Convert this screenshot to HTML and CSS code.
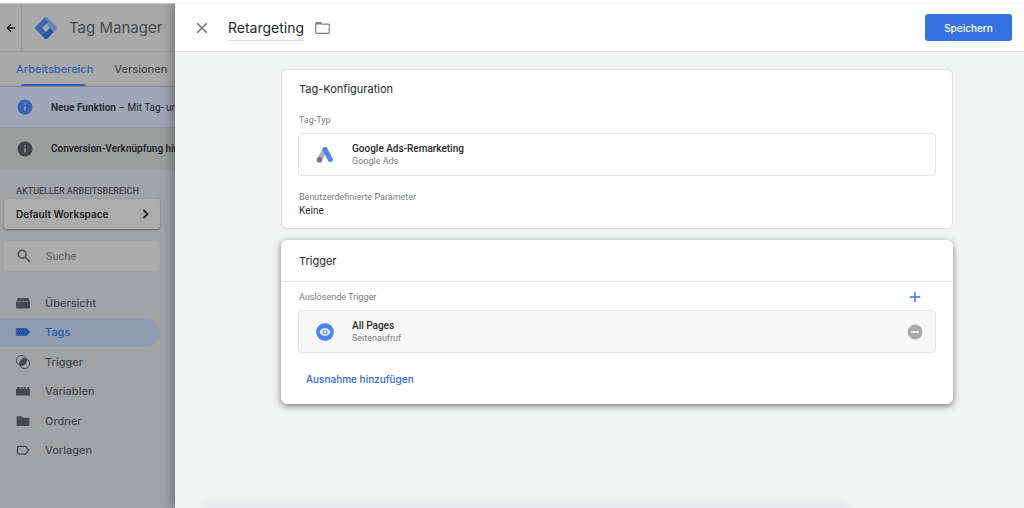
FILE: index.html
```html
<!DOCTYPE html>
<html lang="de">
<head>
<meta charset="utf-8">
<title>Tag Manager – Retargeting</title>
<link rel="stylesheet" href="styles.css">
</head>
<body>
<div class="app">
  <aside class="sidebar">
    <header class="brand">
      <button class="back" aria-label="Zurück">
        <svg width="10" height="10" viewBox="0 0 10 10" fill="none" stroke="currentColor" stroke-width="1.3"><path d="M9 5H1.6M5 1.3 1.4 5 5 8.7"/></svg>
      </button>
      <svg class="logo" width="22" height="22" viewBox="0 0 22 22">
        <path d="M9.7.6a1.9 1.9 0 0 1 2.6 0L21.4 9.700a1.900 1.900 0 0 1 0 2.600l-4.300 4.300-4-4L14.700 11 7.300 3z" fill="#6a86bd"/>
        <path d="M9.300 1 13.300 5 7.300 11l7.700 7.700-2.700 2.700a1.900 1.900 0 0 1-2.600 0L.6 12.300a1.900 1.900 0 0 1 0-2.600z" fill="#3c66ad"/>
        <path d="m11 14.700 3.700-3.700 4 4-6.400 6.400c-.8.800-2 .8-2.800 0l-1.500-3.700z" fill="#2c57a2"/>
        <path d="m11 7.300 3.700 3.700-3.700 3.700L7.300 11z" fill="#a9a9a9"/>
      </svg>
      <span class="brand-name">Tag Manager</span>
    </header>
    <nav class="tabs">
      <a class="tab tab-active" href="#">Arbeitsbereich</a>
      <a class="tab" href="#">Versionen</a>
    </nav>
    <div class="notice notice-new">
      <svg width="16" height="16" viewBox="0 0 16 16"><circle cx="8" cy="8" r="7.500" fill="#3764b4"/><path d="M8 7.200v4.300M8 4.200v1.500" stroke="#a0a7b8" stroke-width="1.500"/></svg>
      <p><b>Neue Funktion</b> – Mit Tag- un</p>
    </div>
    <div class="notice">
      <svg width="16" height="16" viewBox="0 0 16 16"><circle cx="8" cy="8" r="7.500" fill="#424446"/><path d="M8 7.200v4.300M8 4.200v1.500" stroke="#9c9e9e" stroke-width="1.500"/></svg>
      <p><b>Conversion-Verknüpfung hin</b></p>
    </div>
    <div class="tools">
      <h2 class="tools-label">AKTUELLER ARBEITSBEREICH</h2>
      <button class="workspace">Default Workspace
        <svg width="8" height="10" viewBox="0 0 8 10" fill="none" stroke="currentColor" stroke-width="1.800"><path d="m1.500 1 4 4-4 4"/></svg>
      </button>
      <label class="search">
        <svg width="14" height="14" viewBox="0 0 14 14" fill="none" stroke="#4b4d50" stroke-width="1.600"><circle cx="5.200" cy="5.200" r="3.900"/><path d="m8.200 8.200 4.800 4.800"/></svg>
        <input type="search" placeholder="Suche" aria-label="Suche">
      </label>
    </div>
    <nav class="menu">
      <a class="item" href="#"><svg width="16" height="16" viewBox="0 0 16 16" fill="currentColor"><path d="M3.500 3h9.200c.5 0 .8.300 1 .8l.9 2.200H1.600l.9-2.200c.2-.5.5-.8 1-.8zM1 6.500h14v5.700c0 .7-.5 1.200-1.200 1.200H2.200c-.7 0-1.200-.5-1.200-1.200z"/></svg>Übersicht</a>
      <a class="item item-active" href="#"><svg width="16" height="16" viewBox="0 0 16 16"><path d="M1.700 4H11c.6 0 1 .2 1.300.6L15.300 8l-3 3.600c-.3.300-.7.500-1.300.5H1.700c-.5 0-.9-.4-.9-.9V4.900c0-.5.400-.9.900-.9z" fill="#2f5cb0"/><path d="M2 5.500h10M3 7.500h11M2 9.500h11" stroke="#27396a" stroke-width="1" stroke-dasharray="1 1"/></svg>Tags</a>
      <a class="item" href="#"><svg width="16" height="16" viewBox="0 0 16 16"><g fill="none" stroke="currentColor"><circle cx="6.300" cy="6.300" r="4.900"/><circle cx="9.700" cy="9.700" r="4.900"/></g><path d="M11.200 5a4.900 4.900 0 0 1-6.200 6.200A4.900 4.900 0 0 1 11.200 5z" fill="currentColor" stroke="currentColor"/></svg>Trigger</a>
      <a class="item" href="#"><svg width="16" height="16" viewBox="0 0 16 16" fill="currentColor"><path d="M1 6h1V4.300h2.600V6h1.100V4.300h2V6h1V4.300h2V6h1.200V4.300h2.200V6h1v5.600c0 .6-.4 1-1 1H2c-.6 0-1-.4-1-1z"/></svg>Variablen</a>
      <a class="item" href="#"><svg width="16" height="16" viewBox="0 0 16 16" fill="currentColor"><path d="M2.800 3.200h3.700L8 4.700h5.200c.7 0 1.200.5 1.200 1.200v6c0 .7-.5 1.200-1.200 1.200H2.800c-.7 0-1.200-.5-1.200-1.200V4.400c0-.7.5-1.200 1.200-1.200z"/></svg>Ordner</a>
      <a class="item" href="#"><svg width="16" height="16" viewBox="0 0 16 16" fill="none" stroke="currentColor" stroke-width="1.300"><path d="M3.400 4.300h6.700c.4 0 .8.200 1 .5L13.600 8.300l-2.500 3.400c-.2.300-.6.500-1 .5H3.400c-.5 0-.9-.4-.9-.9V5.200c0-.5.400-.9.900-.9z"/></svg>Vorlagen</a>
    </nav>
  </aside>
  <main class="panel">
    <header class="panel-head">
      <button class="close" aria-label="Schließen">
        <svg width="12" height="12" viewBox="0 0 12 12" fill="none" stroke="currentColor" stroke-width="1.400"><path d="m1.200 1.200 9.600 9.600M10.800 1.200 1.200 10.800"/></svg>
      </button>
      <h1 class="title">Retargeting</h1>
      <button class="folder" aria-label="Ordner">
        <svg width="15" height="12" viewBox="0 0 15 12"><path d="M1.700.7h4l1.300 1.400h6.300c.6 0 1 .4 1 1v7.200c0 .6-.4 1-1 1H1.700c-.6 0-1-.4-1-1V1.700c0-.6.4-1 1-1z" fill="none" stroke="currentColor" stroke-width="1.200"/><path d="M1 .8h4.800l1.300 1.600H1z" fill="currentColor"/></svg>
      </button>
      <button class="save">Speichern</button>
    </header>
    <div class="content">
      <section class="card">
        <h2 class="card-title">Tag-Konfiguration</h2>
        <div class="card-body">
          <h3 class="label">Tag-Typ</h3>
          <div class="row">
            <svg class="row-icon" width="18" height="18" viewBox="0 0 18 18" fill="none" stroke-linecap="round"><path d="M9 3.500 3.600 13.500" stroke="#aeb0b3" stroke-width="5"/><path d="M9 3.500l5.400 10" stroke="#4a86ec" stroke-width="5"/><circle cx="3.500" cy="13.700" r="2.800" fill="#78797c"/></svg>
            <div><b>Google Ads-Remarketing</b><span>Google Ads</span></div>
          </div>
          <h3 class="label label-params">Benutzerdefinierte Parameter</h3>
          <p class="value">Keine</p>
        </div>
      </section>
      <section class="card card-raised">
        <h2 class="card-title card-title-ruled">Trigger</h2>
        <div class="card-body trigger-body">
          <div class="label-line">
            <h3 class="label">Auslösende Trigger</h3>
            <button class="add" aria-label="Trigger hinzufügen"><svg width="12" height="12" viewBox="0 0 12 12" fill="none" stroke="currentColor" stroke-width="1.400"><path d="M6 .8v10.400M.8 6h10.400"/></svg></button>
          </div>
          <div class="row row-filled">
            <svg class="row-icon" width="18" height="18" viewBox="0 0 18 18"><circle cx="9" cy="9" r="8.900" fill="#4c86ea"/><path d="M3.600 9C4.600 6.600 6.600 5.200 9 5.200s4.400 1.400 5.400 3.800c-1 2.400-3 3.800-5.400 3.800S4.600 11.400 3.600 9z" fill="#fff"/><circle cx="9" cy="9" r="2" fill="#fff" stroke="#4c86ea" stroke-width="1.200"/></svg>
            <div><b>All Pages</b><span>Seitenaufruf</span></div>
            <button class="remove" aria-label="Entfernen"><svg width="16" height="16" viewBox="0 0 16 16"><circle cx="8" cy="8" r="7.500" fill="#a9a9a9"/><path d="M4 8h8" stroke="#fff" stroke-width="1.500"/></svg></button>
          </div>
          <a class="exception" href="#">Ausnahme hinzufügen</a>
        </div>
      </section>
    </div>
  </main>
</div>
</body>
</html>
```
FILE: styles.css
```css
* { box-sizing: border-box; }
body, h1, h2, h3, p { margin: 0; font-weight: 400; }
body { font-family: Roboto, "Liberation Sans", sans-serif; background: #fff; }
button { font: inherit; color: inherit; background: none; border: 0; padding: 0; display: flex; align-items: center; }
a { text-decoration: none; color: inherit; }
svg { display: block; flex: none; }

.app {
  display: grid;
  grid-template-columns: 175px 1fr;
  min-height: 100vh;
  padding-top: 3px;
}

/* Dimmed navigation behind the open panel */
.sidebar {
  background: #a2a3a5;
  color: #47494c;
  overflow: hidden;
  border-top: 1px solid #c6c6c6;
}
.brand {
  display: flex;
  align-items: center;
  height: 48px;
  background: #a9a9a9;
  border-bottom: 1px solid #989898;
}
.back { height: 100%; width: 22px; justify-content: center; border-right: 1px solid #999; color: #1f2022; }
.logo { margin: 0 12px 0 13px; }
.brand-name { font: 15px Inter, sans-serif; white-space: nowrap; }

.tabs { display: flex; gap: 21px; height: 35px; padding-left: 16px; background: #a9a9a9; border-bottom: 1px solid #86888b; }
.tab { position: relative; display: flex; align-items: center; font: 500 11px Inter, sans-serif; }
.tab-active { color: #3261b5; }
.tab-active::after { content: ""; position: absolute; left: 5px; right: 7px; bottom: 0; height: 2px; border-radius: 2px 2px 0 0; background: #3261b5; }

.notice { display: flex; align-items: center; gap: 18px; height: 41px; padding-left: 17px; background: #9c9e9e; color: #242628; font-size: 10px; white-space: nowrap; }
.notice-new { background: #9fa6b7; border-bottom: 1px solid #9498a1; }
.notice b { font-weight: 600; }

.tools { padding: 17px 15px 0 4px; }
.tools-label { padding-left: 12px; font-size: 9px; font-weight: 500; line-height: 10px; }
.workspace {
  justify-content: space-between;
  width: 100%;
  height: 30px;
  margin-top: 3px;
  padding: 0 10px 0 12px;
  border-radius: 3px;
  background: #acacac;
  box-shadow: 0 1px 2px #66686b;
  color: #242628;
  font: 600 10px Inter, sans-serif;
}
.search { display: flex; align-items: center; gap: 15px; height: 30px; margin-top: 12px; padding: 0 13px; border-radius: 3px; background: #ababab; }
.search input { flex: 1; min-width: 0; padding: 0; border: 0; outline: 0; background: none; font: 11px Roboto, sans-serif; color: #55575a; }
.search input::placeholder { color: #5e6063; opacity: 1; }

.menu { display: grid; grid-template-rows: repeat(6, 1fr); height: 177px; margin: 17px 15px 0 0; }
.item { display: flex; align-items: center; gap: 14px; padding-left: 15px; border-radius: 0 15px 15px 0; font: 500 11px Inter, sans-serif; }
.item-active { background: #929db3; color: #2b57a8; }

/* Editor panel */
.panel {
  position: relative;
  display: flex;
  flex-direction: column;
  background: #f1f2f2;
  border-top: 1px solid #eee;
  box-shadow: -2px 0 12px rgba(0, 0, 0, .35);
  clip-path: inset(0 0 0 -24px);
}
.panel::after { content: ""; position: absolute; left: 32px; right: 180px; bottom: 0; height: 2px; background: #e7e8ea; box-shadow: 0 0 10px 2px #dfe0e3; }
.panel-head { display: flex; align-items: center; height: 48px; padding: 0 12px 0 21px; background: #fff; border-bottom: 1px solid #dcdddd; }
.close { color: #66696c; }
.title { margin-left: 20px; color: #26282b; font: 14px/25px Inter, sans-serif; border-bottom: 1px solid #dadcdd; }
.folder { margin-left: 11px; color: #7d7f82; }
.save { justify-content: center; width: 87px; height: 27px; margin-left: auto; border-radius: 3px; background: #3474e0; color: #fff; font: 500 10px Inter, sans-serif; }

.content { display: grid; gap: 11px; padding: 17px 71px 0 106px; }
.card { background: #fff; border: 1px solid #e2e3e4; border-radius: 6px; }
.card-raised { border-color: #fff; box-shadow: 0 2px 6px rgba(0, 0, 0, .5); }
.card-title { padding: 0 17px; color: #26282b; font: 11px/39px Inter, sans-serif; }
.card-title-ruled { line-height: 40px; border-bottom: 1px solid #dfe0e0; }
.card-body { padding: 5px 16px 9px; }
.label { padding-left: 1px; color: #7a7c7f; font-size: 9px; line-height: 12px; }
.label-params { margin-top: 15px; }
.value { padding-left: 1px; color: #26282b; font-size: 10px; line-height: 16px; }
.row { display: flex; align-items: center; height: 43px; margin-top: 7px; padding: 0 12px 0 17px; border: 1px solid #e3e4e5; border-radius: 4px; }
.row-filled { background: #f8f8f8; }
.row-icon { margin-right: 18px; }
.row b, .row span { display: block; font-size: 10px; line-height: 13px; }
.row b { font-weight: 500; color: #26282b; }
.row span { color: #7a7c7f; font-size: 9px; }
.remove { margin-left: auto; }
.trigger-body { padding-top: 9px; padding-bottom: 15px; }
.label-line { display: flex; align-items: center; justify-content: space-between; height: 12px; padding-right: 15px; }
.add { color: #3474e0; }
.exception { display: inline-block; margin: 17px 0 0 8px; color: #2c6bd8; font: 500 10px/18px Inter, sans-serif; }
```
